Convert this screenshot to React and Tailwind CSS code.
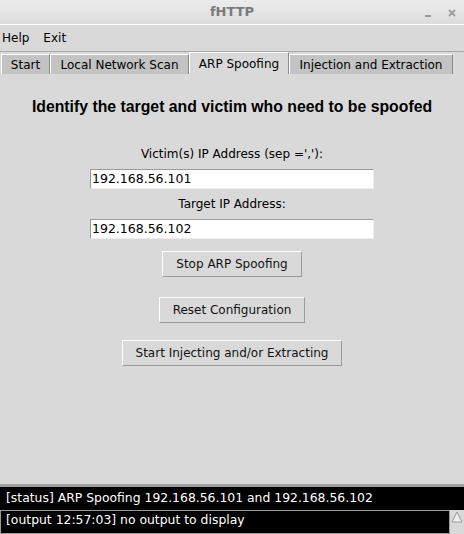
import React from 'react';

const sans = { fontFamily: '"DejaVu Sans", sans-serif' };

function TkButton({ children, className = '' }) {
  return (
    <button
      className={`h-[26px] px-[13px] bg-[#d9d9d9] text-[12px] text-[#111] border border-t-white border-l-white border-r-[#9a9a9a] border-b-[#9a9a9a] ${className}`}
    >
      {children}
    </button>
  );
}

function Entry({ value }) {
  return (
    <div className="w-[284px] h-[20px] bg-white border border-t-[#9a9a9a] border-l-[#9a9a9a] border-r-[#eeeeee] border-b-[#eeeeee] text-[12.5px] leading-[18px] pl-[1px] text-black">
      {value}
    </div>
  );
}

export default function App() {
  const tabs = [
    { name: 'Start', w: 'w-[49px]' },
    { name: 'Local Network Scan', w: 'w-[139px]' },
    { name: 'ARP Spoofing', w: 'w-[100px]', active: true },
    { name: 'Injection and Extraction', w: 'w-[164px]' },
  ];

  return (
    <div className="w-[464px] h-[534px] bg-[#d9d9d9] flex flex-col overflow-hidden" style={sans}>
      {/* Title bar */}
      <div className="h-[25px] flex items-center bg-gradient-to-b from-[#ececec] to-[#dcdcdc] border-b border-white relative">
        <div className="flex-1 text-center text-[13px] font-bold text-[#7a7a7a]">fHTTP</div>
        <div className="absolute right-[8px] top-[8px] flex items-center gap-[17px]">
          <div className="w-[6px] h-[2px] bg-[#9a9a9a] mt-[7px]" />
          <svg width="8" height="8" viewBox="0 0 8 8">
            <path d="M1 1L7 7M7 1L1 7" stroke="#a0a0a0" strokeWidth="2" />
          </svg>
        </div>
      </div>

      {/* Menu */}
      <div className="h-[27px] flex items-center gap-[14px] px-[2px] text-[12px] text-black border-b border-[#a8a8a8]">
        <span>Help</span>
        <span>Exit</span>
      </div>

      {/* Tabs */}
      <div className="h-[23px] flex items-end pl-[1px] border-b border-[#d9d9d9]">
        {tabs.map((t) => (
          <div
            key={t.name}
            className={`${t.w} flex items-center justify-center text-[12px] text-black border-t border-l border-white border-r border-r-[#8a8a8a] ${
              t.active ? 'h-[22px] bg-[#d9d9d9]' : 'h-[20px] bg-[#c3c3c3]'
            }`}
          >
            {t.name}
          </div>
        ))}
      </div>

      {/* Content */}
      <div className="flex-1 flex flex-col items-center">
        <div
          className="mt-[20px] text-[15.8px] font-bold text-black"
          style={{ fontFamily: '"Liberation Sans", Arial, sans-serif' }}
        >
          Identify the target and victim who need to be spoofed
        </div>
        <div className="mt-[26px] text-[12px] text-black">Victim(s) IP Address (sep =','):</div>
        <div className="mt-[6px]">
          <Entry value="192.168.56.101" />
        </div>
        <div className="mt-[6px] text-[12px] text-black">Target IP Address:</div>
        <div className="mt-[6px]">
          <Entry value="192.168.56.102" />
        </div>
        <TkButton className="mt-[12px]">Stop ARP Spoofing</TkButton>
        <TkButton className="mt-[20px]">Reset Configuration</TkButton>
        <TkButton className="mt-[17px]">Start Injecting and/or Extracting</TkButton>
      </div>

      {/* Status */}
      <div className="border-t-[3px] border-[#a0a0a0] bg-black h-[26px] flex items-center px-[6px] text-[12.4px] text-white">
        [status] ARP Spoofing 192.168.56.101 and 192.168.56.102
      </div>
      <div className="h-[24px] flex bg-[#d9d9d9]">
        <div className="flex-1 bg-black border border-[#9a9a9a] text-[12.4px] text-white pl-[5px] leading-[18px]">
          [output 12:57:03] no output to display
        </div>
        <div className="w-[14px] flex flex-col items-center bg-[#d9d9d9]">
          <svg width="14" height="14" viewBox="0 0 14 14">
            <path d="M7 2L12 12H2Z" fill="#eeeeee" stroke="#9a9a9a" />
          </svg>
        </div>
      </div>
    </div>
  );
}
